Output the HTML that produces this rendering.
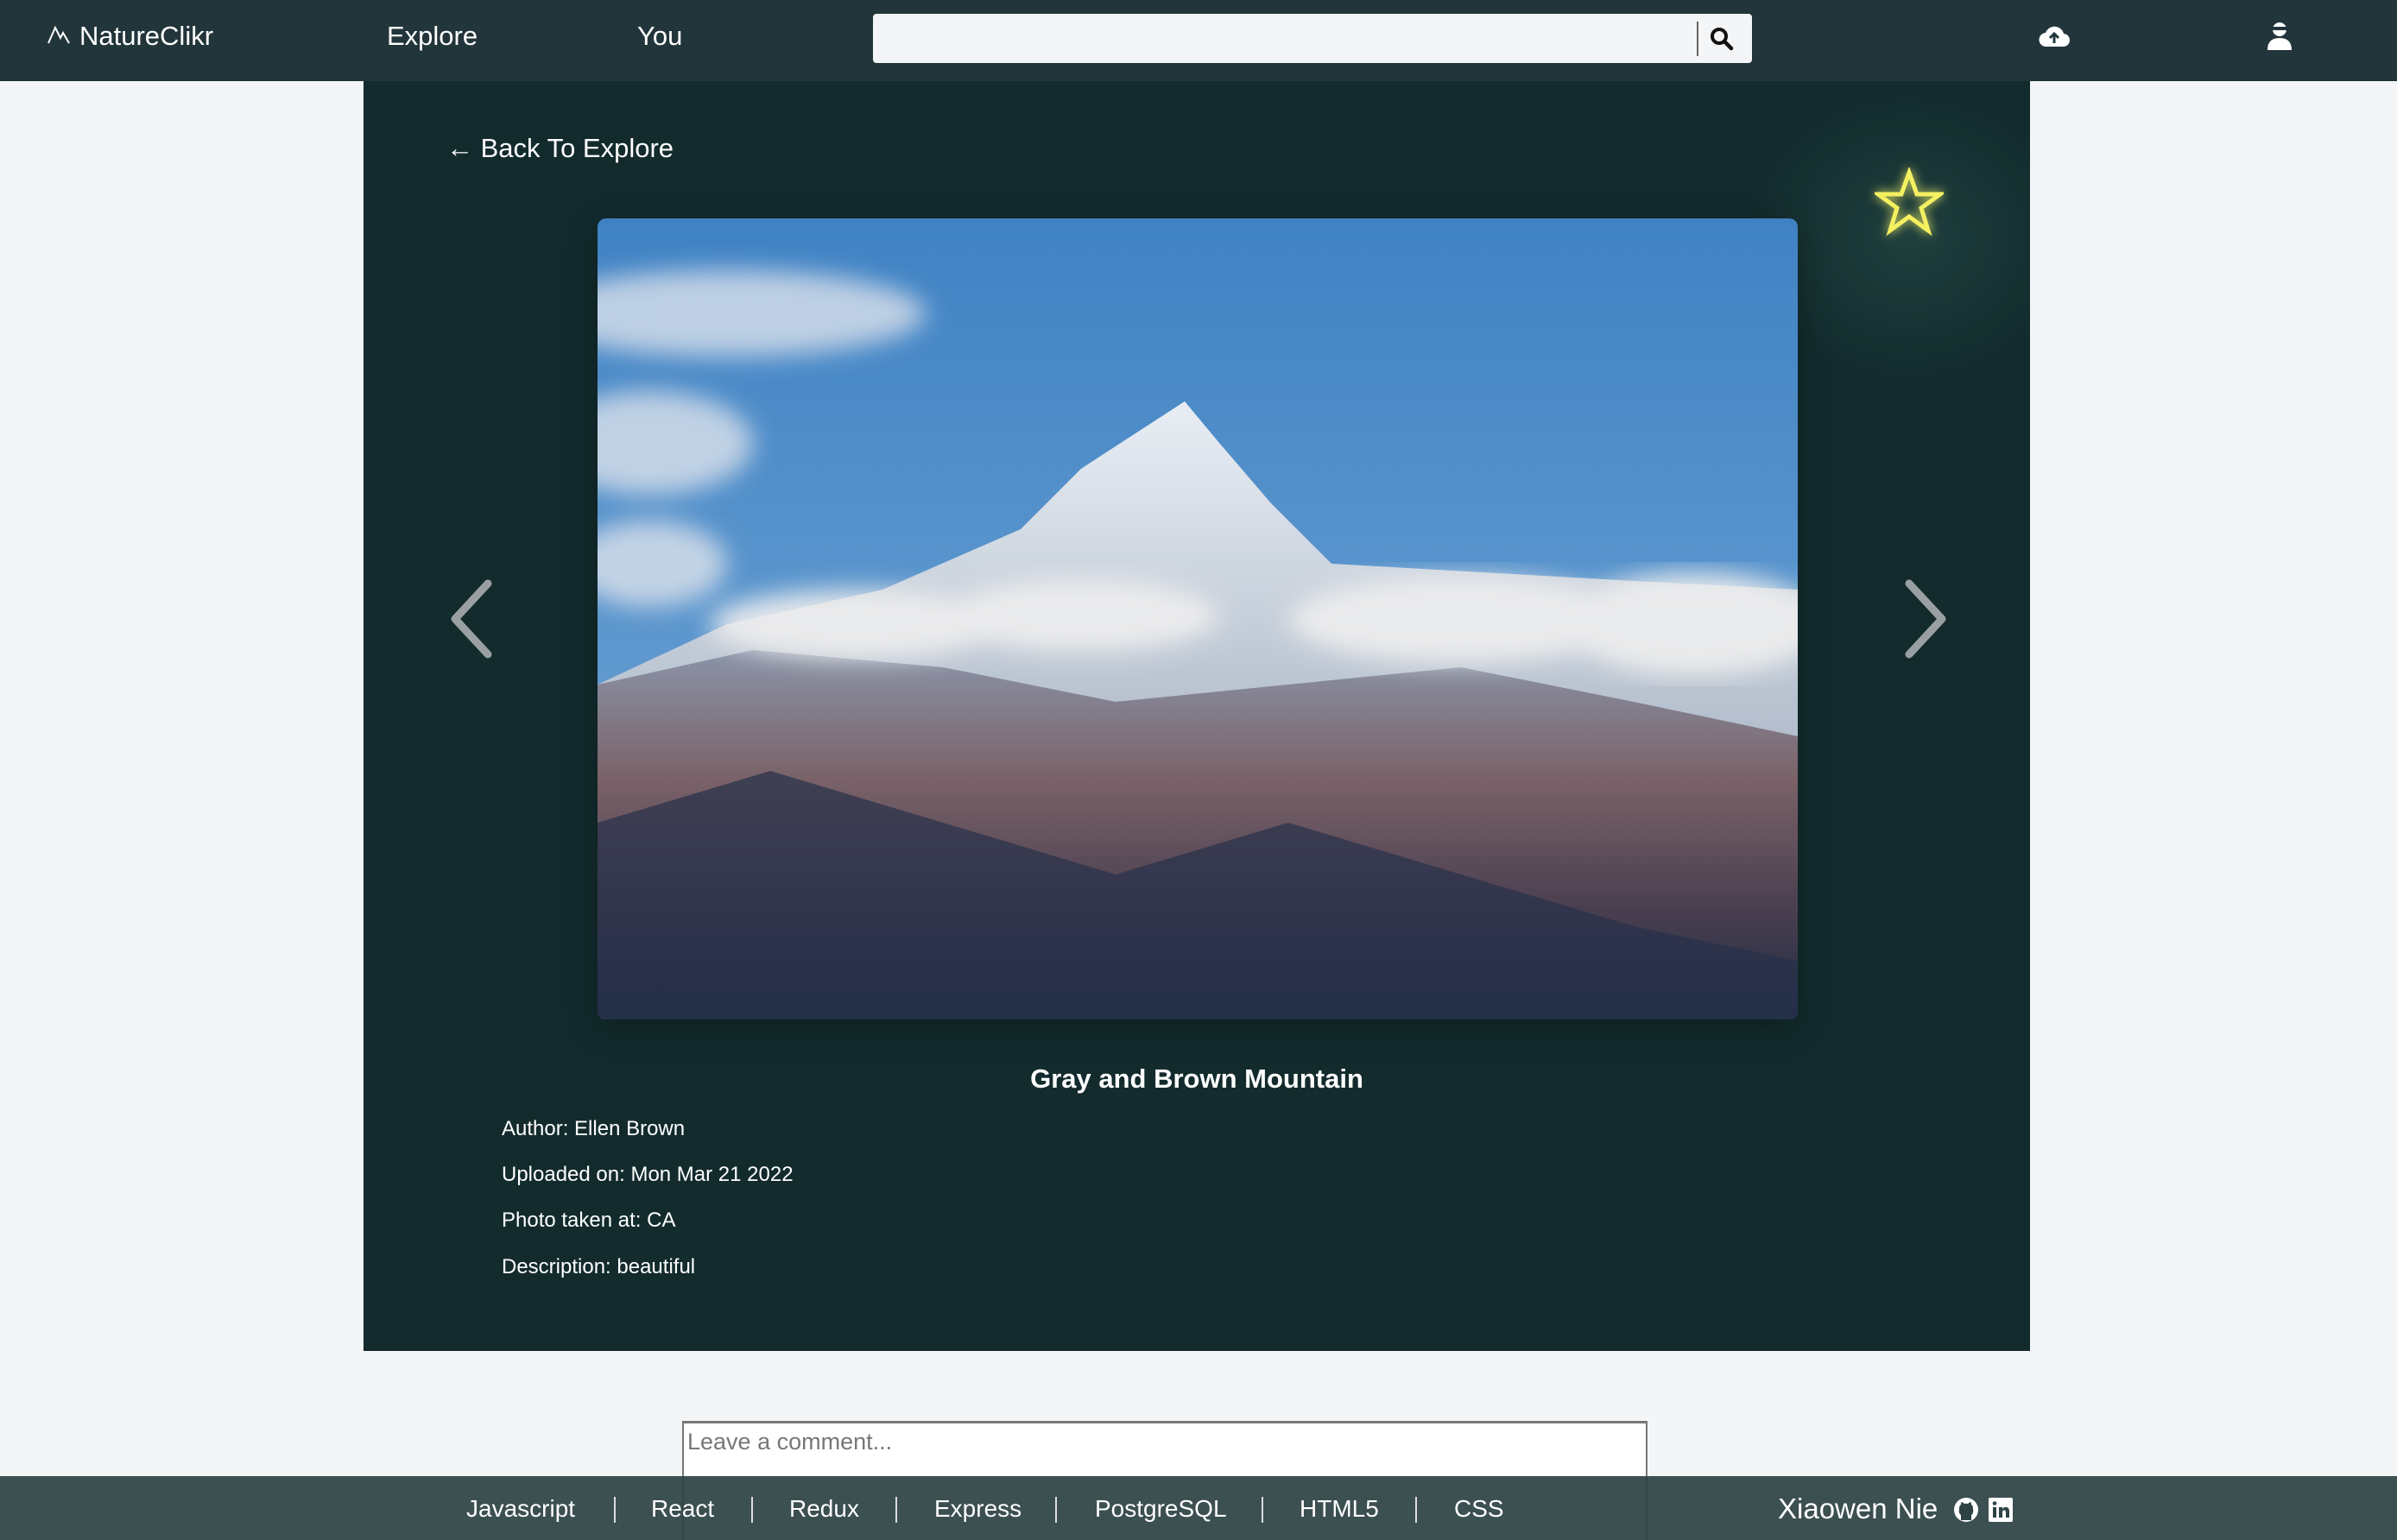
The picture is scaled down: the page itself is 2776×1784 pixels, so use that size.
<!DOCTYPE html>
<html><head><meta charset="utf-8"><style>
*{margin:0;padding:0;box-sizing:border-box}
html,body{width:2776px;height:1784px;overflow:hidden}
body{background:#f3f5f7;font-family:"Liberation Sans",sans-serif;position:relative}
.nav{position:absolute;left:0;top:0;width:2776px;height:94px;background:#22353a;color:#fff}
.nav .t{position:absolute;top:24px;font-size:31px}
.search{position:absolute;left:1011px;top:16px;width:1018px;height:57px;background:#f3f5f7;border-radius:4px}
.search .bar{position:absolute;left:954px;top:9px;width:2px;height:40px;background:#666}
.panel{position:absolute;left:421px;top:94px;width:1930px;height:1471px;background:#132b2d;color:#fff;overflow:hidden}
.glow{position:absolute;left:1600px;top:10px;width:380px;height:340px;border-radius:50%;background:radial-gradient(ellipse at center,rgba(40,80,75,.55),rgba(19,43,45,0) 70%)}
.back{position:absolute;left:96px;top:60px;font-size:31px}
.img{position:absolute;left:271px;top:159px;width:1390px;height:928px;border-radius:10px;overflow:hidden;box-shadow:0 10px 40px rgba(0,0,0,.3)}
.title{position:absolute;left:0;width:1930px;text-align:center;top:1138px;font-size:31px;font-weight:bold}
.info{position:absolute;left:160px;font-size:24px}
.ta{position:absolute;left:790px;top:1646px;width:1118px;height:138px;background:#fff;border:2px solid #777;border-top-width:3px;border-bottom:none;color:#777;font-size:27px;padding:6px 4px}
.foot{position:absolute;left:0;top:1710px;width:2776px;height:74px;background:rgba(45,66,68,.93);color:#fff;font-size:28px}
.foot span{position:absolute;top:22px}
.sep{position:absolute;top:24px;width:2px;height:30px;background:#ddd}
</style></head><body>
<div class="nav">
  <svg style="position:absolute;left:54px;top:28px" width="28" height="24" viewBox="0 0 28 24"><path d="M2 22 L10 4 L16 16 L19 10 L26 22" fill="none" stroke="#fff" stroke-width="2"/></svg>
  <div class="t" style="left:92px">NatureClikr</div>
  <div class="t" style="left:448px">Explore</div>
  <div class="t" style="left:738px">You</div>
  <div class="search"><div class="bar"></div>
    <svg style="position:absolute;left:968px;top:14px" width="30" height="30" viewBox="0 0 30 30"><circle cx="12" cy="12" r="8" fill="none" stroke="#111" stroke-width="4"/><path d="M18 18 L26 26" stroke="#111" stroke-width="4.5" stroke-linecap="round"/></svg>
  </div>
  <svg style="position:absolute;left:2361px;top:28px" width="36" height="28" viewBox="0 0 36 28"><path d="M9 26 A8 8 0 0 1 8 10 A11 11 0 0 1 29 11 A7.5 7.5 0 0 1 28 26 Z" fill="#fff"/><path d="M18 22 V12 M13 16 L18 11 L23 16" stroke="#22353a" stroke-width="3" fill="none"/></svg>
  <svg style="position:absolute;left:2624px;top:24px" width="32" height="34" viewBox="0 0 32 34"><circle cx="16" cy="10" r="8" fill="#fff"/><rect x="8" y="7" width="16" height="4" fill="#22353a"/><path d="M2 34 Q2 20 16 20 Q30 20 30 34 Z" fill="#fff"/></svg>
</div>
<div class="panel">
  <div class="glow"></div>
  <div class="back">← Back To Explore</div>
  <svg style="position:absolute;left:1750px;top:100px;filter:drop-shadow(0 0 6px #ee6)" width="80" height="80" viewBox="0 0 80 80"><polygon points="40,6 49,31 76,31 54,47 62,73 40,57 18,73 26,47 4,31 31,31" fill="none" stroke="#f5f060" stroke-width="5"/></svg>
  <svg style="position:absolute;left:96px;top:576px" width="56" height="94" viewBox="0 0 56 94"><path d="M48 6 L10 47 L48 88" fill="none" stroke="#9aa0a2" stroke-width="9" stroke-linecap="round" stroke-linejoin="round"/></svg>
  <svg style="position:absolute;left:1782px;top:576px" width="56" height="94" viewBox="0 0 56 94"><path d="M8 6 L46 47 L8 88" fill="none" stroke="#9aa0a2" stroke-width="9" stroke-linecap="round" stroke-linejoin="round"/></svg>
  <div class="img"><svg width="1390" height="928" viewBox="0 0 1390 928">
    <defs>
      <linearGradient id="sky" x1="0" y1="0" x2="0" y2="1"><stop offset="0" stop-color="#3f82c4"/><stop offset="1" stop-color="#78aad6"/></linearGradient>
      <linearGradient id="mt" x1="0" y1="0" x2="0" y2="1"><stop offset="0" stop-color="#8a94a8"/><stop offset=".35" stop-color="#7a6268"/><stop offset=".7" stop-color="#4a3f50"/><stop offset="1" stop-color="#1f2c44"/></linearGradient>
      <linearGradient id="pk" x1="0" y1="0" x2="0" y2="1"><stop offset="0" stop-color="#e8eef4"/><stop offset="1" stop-color="#8694aa"/></linearGradient>
      <filter id="b"><feGaussianBlur stdDeviation="14"/></filter>
    </defs>
    <rect width="1390" height="928" fill="url(#sky)"/>
    <g fill="#e6e8ee" opacity=".75" filter="url(#b)"><ellipse cx="150" cy="110" rx="230" ry="50"/><ellipse cx="60" cy="260" rx="120" ry="60"/><ellipse cx="60" cy="400" rx="90" ry="50"/></g>
    <path d="M0 540 L150 470 L330 430 L490 360 L560 290 L680 212 L720 260 L780 330 L850 400 L1200 420 L1390 430 L1390 928 L0 928 Z" fill="url(#pk)"/>
    <path d="M0 540 L180 500 L400 520 L600 560 L800 540 L1000 520 L1200 560 L1390 600 L1390 928 L0 928 Z" fill="url(#mt)"/>
    <path d="M0 700 L200 640 L400 700 L600 760 L800 700 L1000 760 L1200 820 L1390 860 L1390 928 L0 928 Z" fill="#26304a" opacity=".7"/>
    <g fill="#eeeeee" opacity=".92" filter="url(#b)"><ellipse cx="300" cy="470" rx="170" ry="40"/><ellipse cx="560" cy="460" rx="160" ry="42"/><ellipse cx="1000" cy="465" rx="200" ry="50"/><ellipse cx="1270" cy="470" rx="150" ry="60"/></g>
  </svg></div>
  <div class="title">Gray and Brown Mountain</div>
  <div class="info" style="top:1200px">Author: Ellen Brown</div>
  <div class="info" style="top:1253px">Uploaded on: Mon Mar 21 2022</div>
  <div class="info" style="top:1306px">Photo taken at: CA</div>
  <div class="info" style="top:1360px">Description: beautiful</div>
</div>
<div class="ta">Leave a comment...</div>
<div class="foot">
  <span style="left:540px">Javascript</span><div class="sep" style="left:711px"></div>
  <span style="left:754px">React</span><div class="sep" style="left:870px"></div>
  <span style="left:914px">Redux</span><div class="sep" style="left:1037px"></div>
  <span style="left:1082px">Express</span><div class="sep" style="left:1222px"></div>
  <span style="left:1268px">PostgreSQL</span><div class="sep" style="left:1461px"></div>
  <span style="left:1505px">HTML5</span><div class="sep" style="left:1639px"></div>
  <span style="left:1684px">CSS</span>
  <span style="left:2059px;font-size:33px;top:19px">Xiaowen Nie</span>
  <svg style="position:absolute;left:2262px;top:24px" width="30" height="30" viewBox="0 0 30 30"><circle cx="15" cy="15" r="14" fill="#fff"/><path d="M9 27 V21 Q6 19 7 14 Q7 10 9 9 Q9 6 10 6 Q12 7 13 8 Q15 7.5 17 8 Q18 7 20 6 Q21 6 21 9 Q23 10 23 14 Q24 19 21 21 V27" fill="#2d4244"/></svg>
  <svg style="position:absolute;left:2303px;top:25px" width="28" height="28" viewBox="0 0 28 28"><rect width="28" height="28" rx="2" fill="#fff"/><rect x="5" y="11" width="4" height="12" fill="#2d4244"/><circle cx="7" cy="6.5" r="2.3" fill="#2d4244"/><path d="M12 11 H16 V13 Q18 10.5 21 11 Q24 11.5 24 16 V23 H20 V17 Q20 14.5 18 14.5 Q16 14.5 16 17 V23 H12 Z" fill="#2d4244"/></svg>
</div>
</body></html>
